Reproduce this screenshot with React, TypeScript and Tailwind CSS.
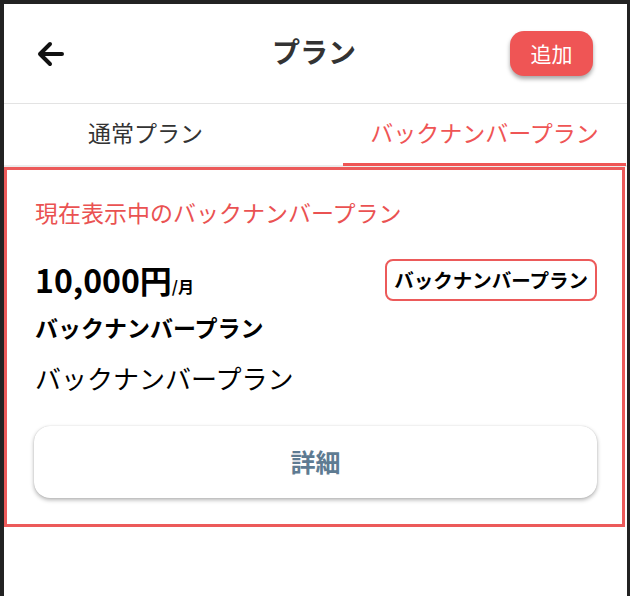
const font = { fontFamily: '"Noto Sans CJK JP", "Noto Sans", sans-serif' };

const BackArrow = () => (
    <svg width="30" height="28" viewBox="0 0 30 28" fill="none">
        <path
            d="M15 4 L5 14 L15 24 M5 14 H27"
            stroke="#111"
            strokeWidth="4"
            strokeLinecap="round"
            strokeLinejoin="round"
        />
    </svg>
);

const App = () => {
    return (
        <div
            className="w-[630px] h-[596px] bg-[#222] pl-[4px] pt-[4px] pr-[3px]"
            style={font}
        >
            <div className="h-full bg-white flex flex-col">
                {/* header */}
                <div className="h-[100px] grid grid-cols-[1fr_auto_1fr] items-center border-b border-[#e3e3e3] pl-[31px] pr-[34px]">
                    <div className="flex items-center">
                        <BackArrow />
                    </div>
                    <h1 className="text-[28px] font-bold text-[#333] leading-none pb-[6px]">
                        プラン
                    </h1>
                    <div className="flex justify-end">
                        <button className="w-[83px] h-[45px] rounded-[14px] bg-[#ef5555] text-white text-[21px] shadow-[0_3px_4px_rgba(0,0,0,0.35)]">
                            追加
                        </button>
                    </div>
                </div>

                {/* tabs */}
                <div className="h-[63px] flex justify-between border-b-2 border-[#ececec]">
                    <div className="w-[283px] flex items-center justify-center text-[23px] text-[#333] pb-[5px]">
                        通常プラン
                    </div>
                    <div className="w-[283px] flex items-center justify-center text-[23px] text-[#ef5555] border-b-[3px] border-[#ef5555] -mb-[1px] mr-[1px] pb-[2px]">
                        バックナンバープラン
                    </div>
                </div>

                {/* card */}
                <div className="border-[3px] border-[#ec5a5a] mr-[2px] pt-[25px] pb-[26px] pl-[27px] pr-[25px] flex flex-col">
                    <p className="text-[23px] leading-[34px] text-[#ea5252] pl-[1px]">
                        現在表示中のバックナンバープラン
                    </p>
                    <div className="mt-[30px] h-[42px] flex items-center justify-between">
                        <p className="font-bold text-black pl-[1px] leading-none pb-[3px]">
                            <span className="text-[32px]">10,000円</span>
                            <span className="text-[16px]">/月</span>
                        </p>
                        <span className="h-[42px] px-[7px] flex items-center rounded-[8px] border-2 border-[#ec5a5a] text-[19.5px] font-bold text-black pb-[1px]">
                            バックナンバープラン
                        </span>
                    </div>
                    <p className="mt-[9px] text-[23px] leading-[34px] font-bold text-black pl-[1px]">
                        バックナンバープラン
                    </p>
                    <p className="mt-[15px] text-[26px] leading-[38px] text-black pl-[1px]">
                        バックナンバープラン
                    </p>
                    <button className="mt-[29px] h-[72px] rounded-[16px] bg-white text-[25px] font-bold text-[#5e7b92] shadow-[0_2px_4px_rgba(0,0,0,0.3),0_0_1px_rgba(0,0,0,0.2)]">
                        詳細
                    </button>
                </div>
            </div>
        </div>
    );
};

export default App;
